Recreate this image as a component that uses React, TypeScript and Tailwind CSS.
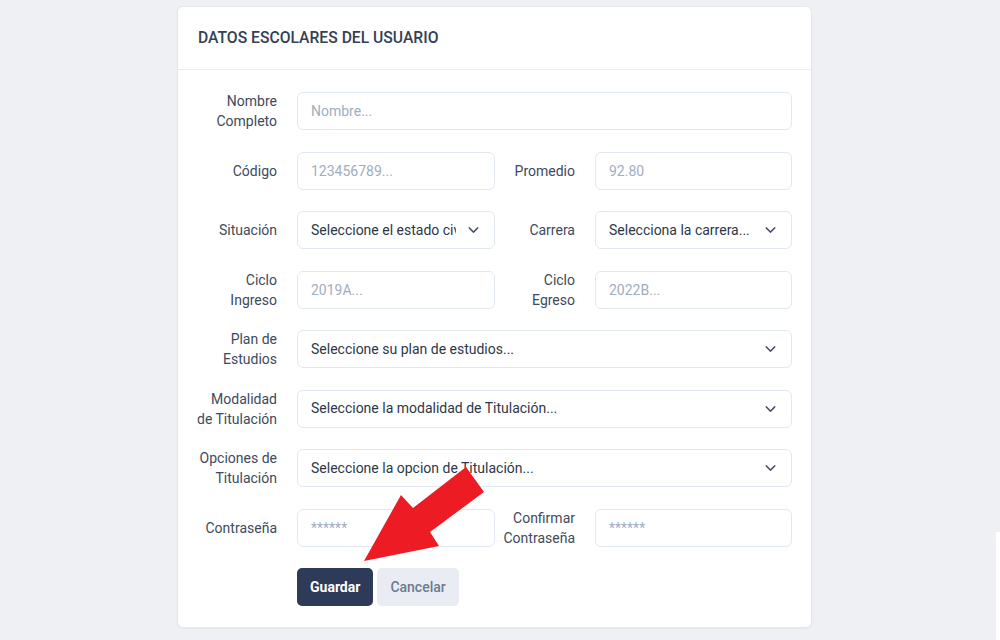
import { ChevronDown } from "lucide-react";

const Label = ({ children, wide = true }: { children: React.ReactNode; wide?: boolean }) => (
  <label
    className={`${wide ? "w-[80px]" : "flex-1"} shrink-0 whitespace-nowrap text-right text-[14px] leading-5 text-[#3e4a5c]`}
  >
    {children}
  </label>
);

const Input = ({ placeholder, className = "" }: { placeholder: string; className?: string }) => (
  <input
    placeholder={placeholder}
    className={`h-[38px] rounded-[6px] border border-[#e2e8f0] bg-white px-[13px] text-[14px] text-[#2d3748] outline-none placeholder:text-[#a0aec0] ${className}`}
  />
);

const Select = ({ text, className = "" }: { text: string; className?: string }) => (
  <div
    className={`relative flex h-[38px] items-center rounded-[6px] border border-[#e2e8f0] bg-white pl-[13px] pr-[38px] text-[14px] text-[#2d3748] ${className}`}
  >
    <span className="overflow-hidden whitespace-nowrap">{text}</span>
    <ChevronDown size={17} strokeWidth={2} className="absolute right-[12px] top-1/2 -translate-y-1/2 text-[#4a5568]" />
  </div>
);

const Row = ({ children }: { children: React.ReactNode }) => (
  <div className="flex min-h-[40px] items-center">{children}</div>
);

export default function App() {
  return (
    <div
      className="relative min-h-[640px] w-full overflow-hidden bg-[#eef0f4] pt-[6px]"
      style={{ fontFamily: "Roboto, 'Liberation Sans', sans-serif" }}
    >
      <div className="ml-[177px] w-[635px] rounded-[6px] border border-[#e4e8ef] bg-white shadow-[0_1px_2px_rgba(0,0,0,0.04)]">
        <div className="flex h-[63px] items-center border-b border-[#e8ecf1] px-5">
          <h2 className="text-[15.7px] font-medium uppercase text-[#344154]">
            Datos escolares del usuario
          </h2>
        </div>

        <div className="flex flex-col gap-[19.5px] px-[19px] pb-[21px] pt-[21px]">
          <Row>
            <Label>
              Nombre
              <br />
              Completo
            </Label>
            <Input placeholder="Nombre..." className="ml-5 flex-1" />
          </Row>

          <Row>
            <Label>Código</Label>
            <Input placeholder="123456789..." className="ml-5 w-[198px]" />
            <Label wide={false}>Promedio</Label>
            <Input placeholder="92.80" className="ml-5 w-[197px]" />
          </Row>

          <Row>
            <Label>Situación</Label>
            <Select text="Seleccione el estado civil..." className="ml-5 w-[198px]" />
            <Label wide={false}>Carrera</Label>
            <Select text="Selecciona la carrera..." className="ml-5 w-[197px]" />
          </Row>

          <Row>
            <Label>
              Ciclo
              <br />
              Ingreso
            </Label>
            <Input placeholder="2019A..." className="ml-5 w-[198px]" />
            <Label wide={false}>
              Ciclo
              <br />
              Egreso
            </Label>
            <Input placeholder="2022B..." className="ml-5 w-[197px]" />
          </Row>

          <Row>
            <Label>
              Plan de
              <br />
              Estudios
            </Label>
            <Select text="Seleccione su plan de estudios..." className="ml-5 flex-1" />
          </Row>

          <Row>
            <Label>
              Modalidad
              <br />
              de Titulación
            </Label>
            <Select text="Seleccione la modalidad de Titulación..." className="ml-5 flex-1" />
          </Row>

          <Row>
            <Label>
              Opciones de
              <br />
              Titulación
            </Label>
            <Select text="Seleccione la opcion de Titulación..." className="ml-5 flex-1" />
          </Row>

          <Row>
            <Label>Contraseña</Label>
            <Input placeholder="******" className="ml-5 w-[198px]" />
            <Label wide={false}>
              Confirmar
              <br />
              Contraseña
            </Label>
            <Input placeholder="******" className="ml-5 w-[197px]" />
          </Row>

          <div className="mt-[1px] flex gap-1 pl-[100px]">
            <button className="h-[38px] rounded-[5px] bg-[#2d3a58] px-[13px] text-[14px] font-bold text-white">
              Guardar
            </button>
            <button className="h-[38px] rounded-[5px] bg-[#e9edf3] px-[13px] text-[14px] font-medium text-[#6b7a90]">
              Cancelar
            </button>
          </div>
        </div>
      </div>

      {/* annotation arrow */}
      <svg className="pointer-events-none absolute left-0 top-0" width="1000" height="640" viewBox="0 0 1000 640">
        <polygon
          points="364,561 401,495 413,508 466,467 484,492 430,532 439,546"
          fill="#ed1c24"
        />
      </svg>

      <div className="absolute right-0 top-[532px] h-[108px] w-[4px] bg-white" />
    </div>
  );
}
